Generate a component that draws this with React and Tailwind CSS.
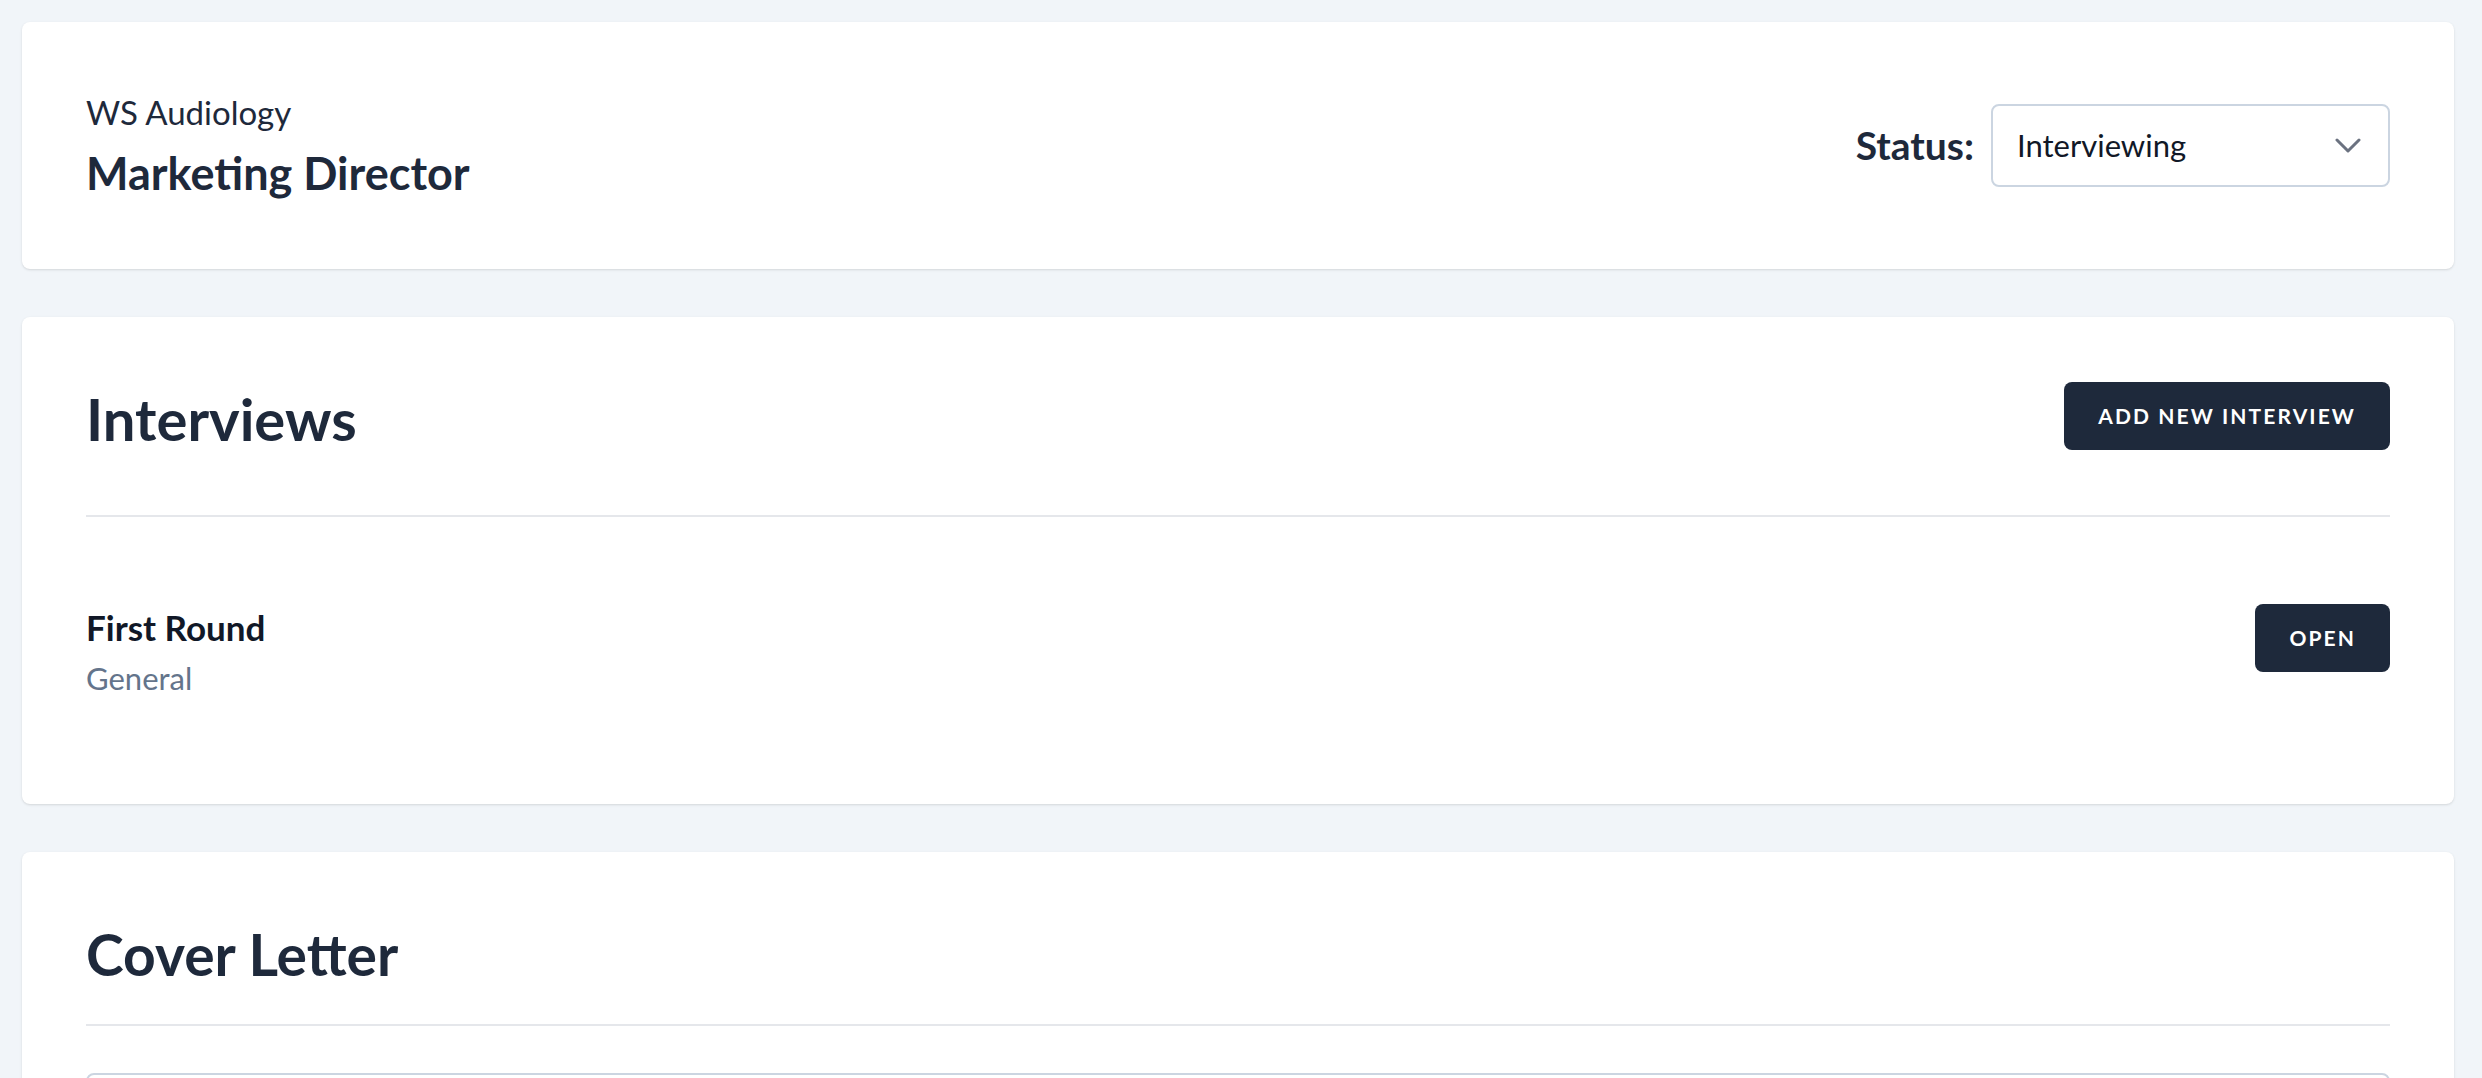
import React from 'react';

function Chevron() {
  return (
    <svg width="26" height="16" viewBox="0 0 26 16" fill="none" className="shrink-0">
      <polyline points="2,2 13,13 24,2" stroke="#6b7280" strokeWidth="3" strokeLinecap="round" strokeLinejoin="round" />
    </svg>
  );
}

function DarkButton({ children }) {
  return (
    <button className="h-[68px] rounded-lg bg-[#1e293b] px-[34px] text-[21px] font-bold uppercase tracking-[0.1em] text-white">
      {children}
    </button>
  );
}

export default function App() {
  return (
    <div className="min-h-screen bg-[#f1f5f9] pt-[22px] pl-[22px] pr-[28px] pb-[22px] font-['Lato',sans-serif] text-[#1e293b]">
      <div className="flex flex-col gap-[48px]">
        {/* job header */}
        <section className="flex h-[247px] items-center justify-between rounded-lg bg-white px-16 shadow-sm">
          <div className="flex flex-col">
            <p className="text-[33px] leading-[43px]">WS Audiology</p>
            <h1 className="mt-[11px] text-[45px] font-bold leading-[56px]">Marketing Director</h1>
          </div>
          <div className="flex items-center gap-[17px]">
            <span className="text-[39px] font-bold">Status:</span>
            <div className="flex h-[83px] w-[399px] items-center justify-between rounded-lg border-2 border-[#cbd5e1] pl-[24px] pr-[27px]">
              <span className="text-[31px] text-[#111827]">Interviewing</span>
              <Chevron />
            </div>
          </div>
        </section>

        {/* interviews */}
        <section className="rounded-lg bg-white px-16 pt-16 pb-[104px] shadow-sm">
          <div className="flex items-start justify-between border-b-2 border-[#e5e7eb] pb-[58px]">
            <h2 className="text-[58px] font-bold leading-[76px]">Interviews</h2>
            <div className="mt-[1px]">
              <DarkButton>Add New Interview</DarkButton>
            </div>
          </div>
          <div className="mt-[87px] flex items-start justify-between">
            <div className="flex flex-col">
              <h3 className="text-[35px] font-bold leading-[46px] text-[#111827]">First Round</h3>
              <p className="mt-[6px] text-[31px] leading-[44px] text-[#64748b]">General</p>
            </div>
            <DarkButton>Open</DarkButton>
          </div>
        </section>

        {/* cover letter */}
        <section className="rounded-lg bg-white px-16 pt-16 pb-16 shadow-sm">
          <div className="border-b-2 border-[#e5e7eb] pb-[32px]">
            <h2 className="text-[57px] font-bold leading-[76px]">Cover Letter</h2>
          </div>
          <div className="mt-[47px] h-[320px] rounded-lg border-2 border-[#cbd5e1]" />
        </section>
      </div>
    </div>
  );
}
